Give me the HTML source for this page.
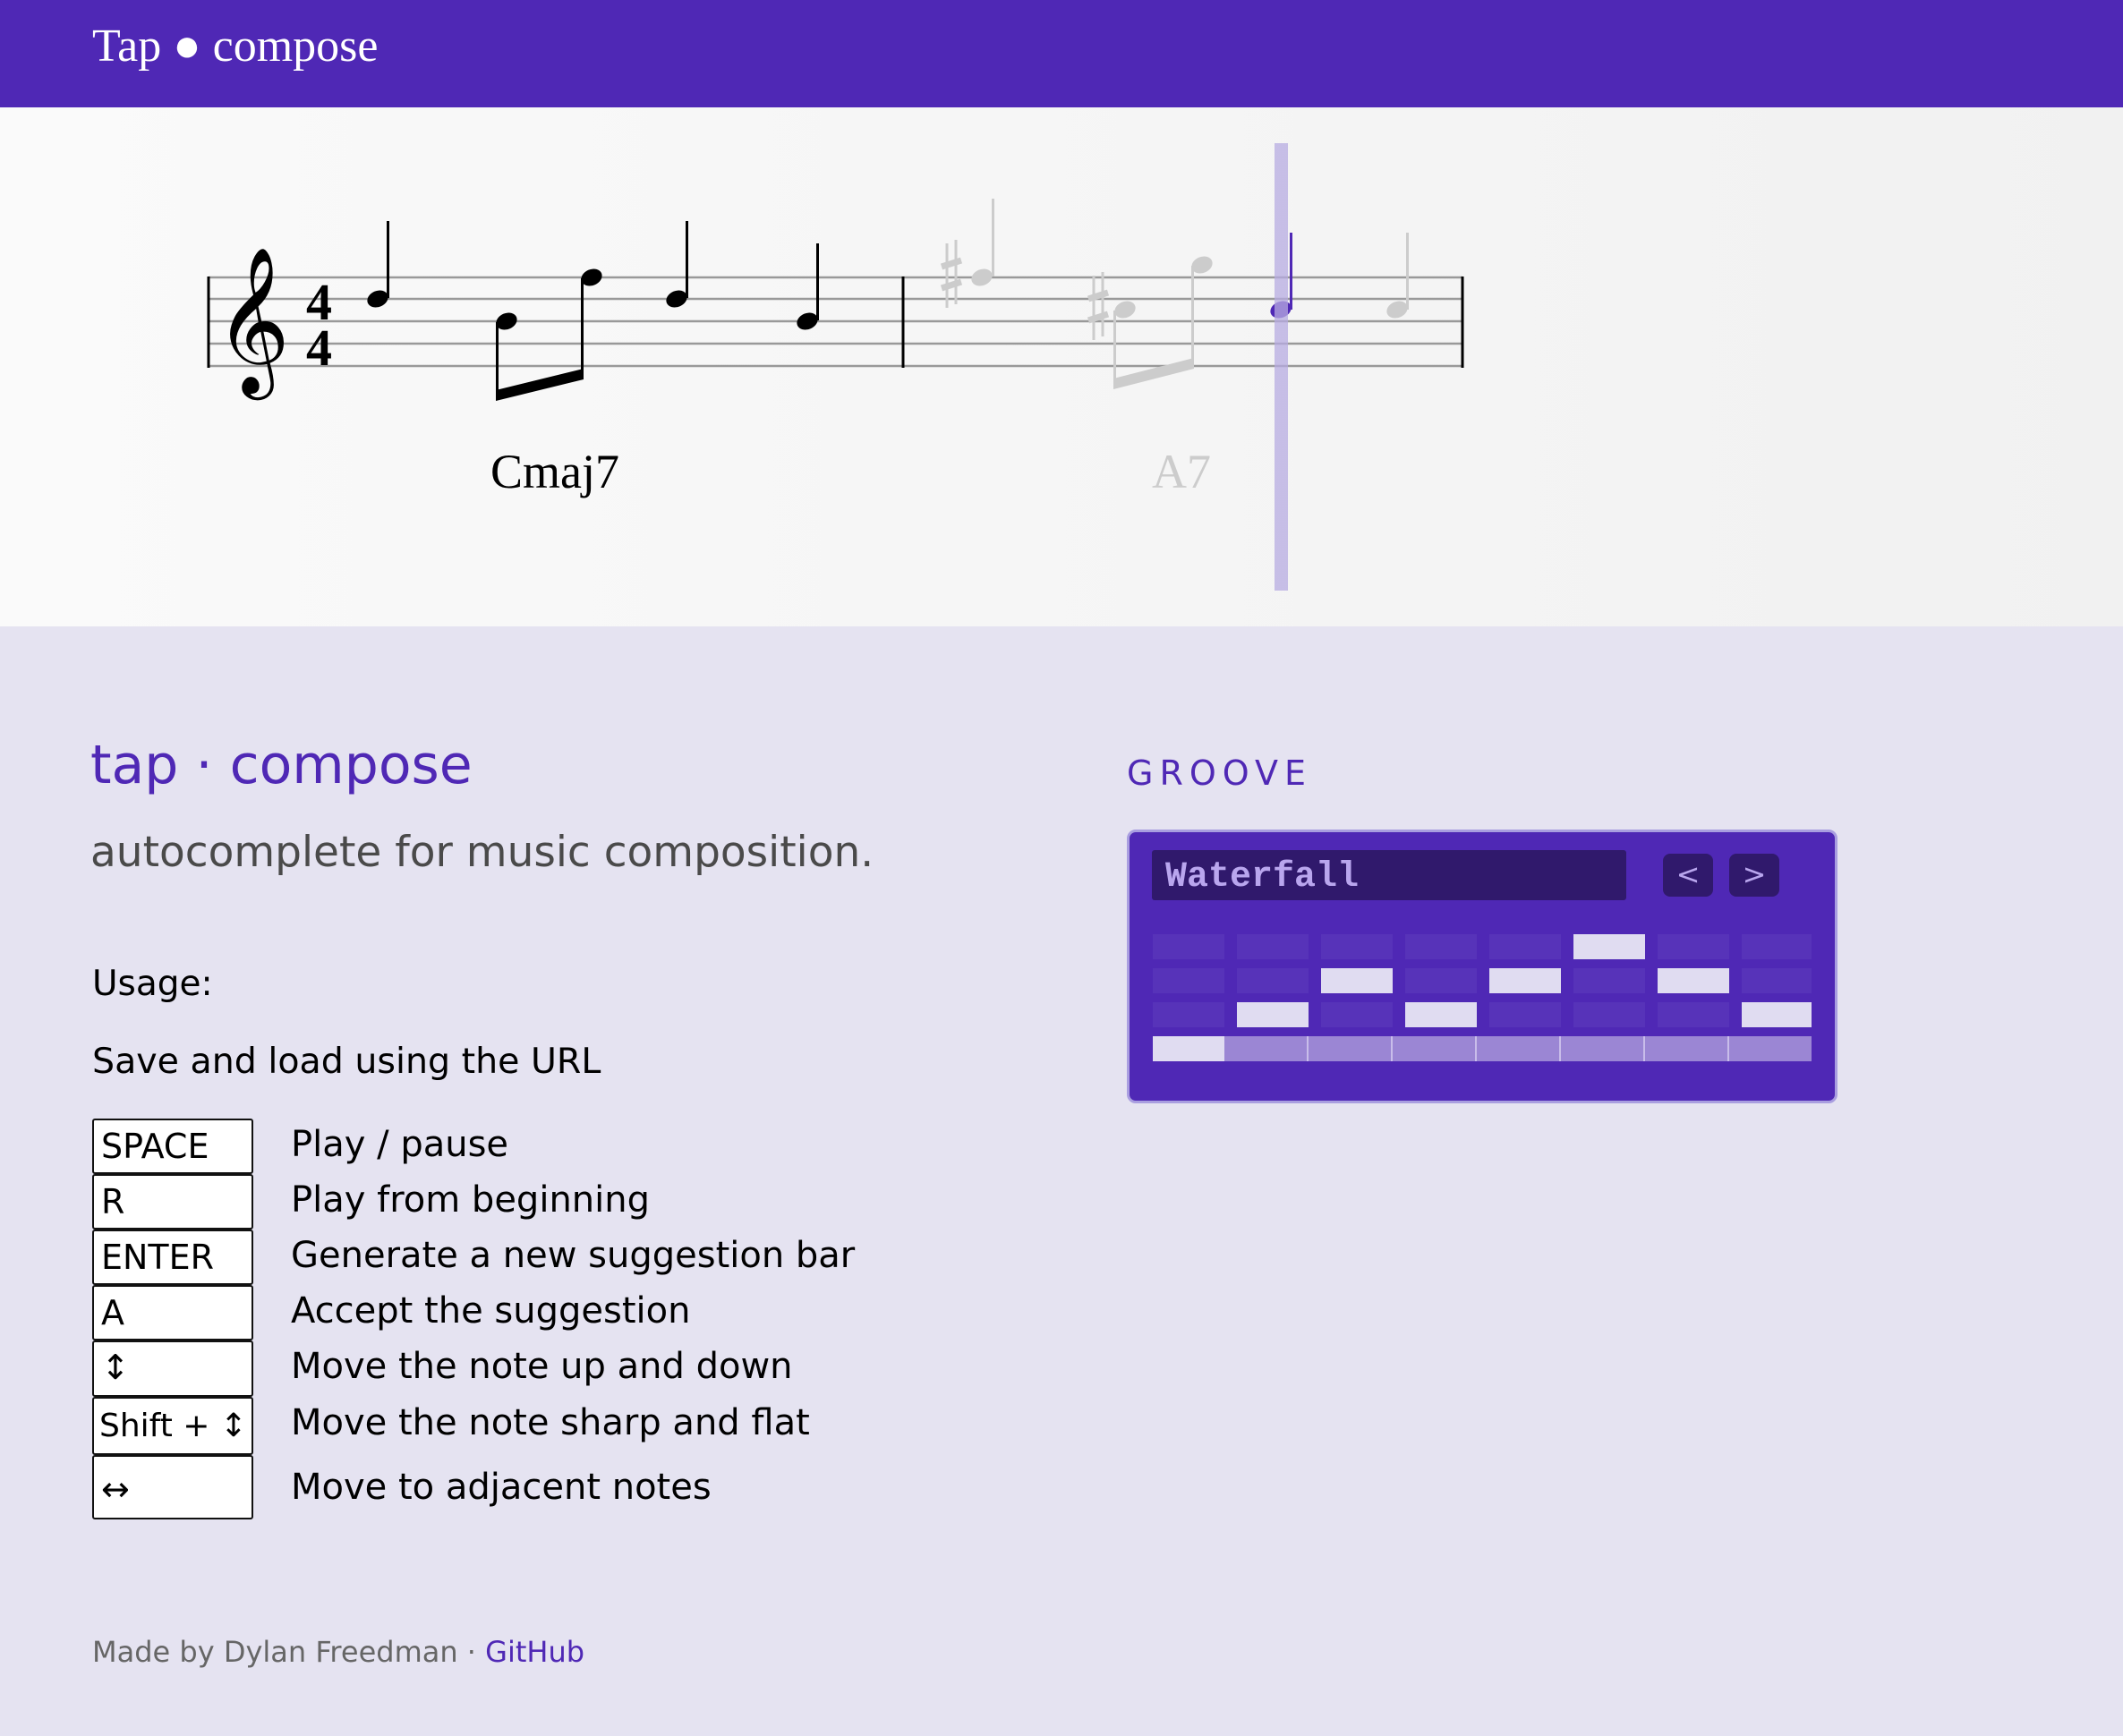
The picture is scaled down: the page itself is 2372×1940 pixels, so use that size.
<!DOCTYPE html>
<html><head><meta charset="utf-8"><style>
*{margin:0;padding:0;box-sizing:border-box}
body{width:2372px;height:1940px;overflow:hidden;background:#e5e3f1;font-family:"DejaVu Sans","Liberation Sans",sans-serif;position:relative}
.hdr{position:absolute;left:0;top:0;width:2372px;height:120px;background:#4f28b5}
.hdr span{position:absolute;left:103px;top:22px;font:52px "Liberation Serif",serif;color:#fff;white-space:nowrap}
.score{position:absolute;left:0;top:120px;width:2372px;height:580px;background:linear-gradient(90deg,#fafafa,#f1f1f1)}
.abs{position:absolute;white-space:nowrap}
.key{position:absolute;left:103px;width:180px;background:#fff;border:2px solid #111;border-radius:3px;font-size:38px;color:#000;padding-left:8px;display:flex;align-items:center;white-space:nowrap;overflow:hidden}
.desc{position:absolute;left:325px;font-size:40px;color:#000;white-space:nowrap}
.cell{position:absolute;width:80px;height:28px;background:#5733b9}
.on{background:#e0dcf1}
</style></head><body>
<div class="hdr"><span>Tap ● compose</span></div>
<div class="score">
<svg width="2372" height="580" viewBox="0 120 2372 580" style="position:absolute;left:0;top:0">
<g stroke="#999" stroke-width="2.5">
<line x1="233" y1="310" x2="1634" y2="310"/><line x1="233" y1="334" x2="1634" y2="334"/><line x1="233" y1="359" x2="1634" y2="359"/><line x1="233" y1="384" x2="1634" y2="384"/><line x1="233" y1="409" x2="1634" y2="409"/>
</g>
<g stroke="#000" stroke-width="3"><line x1="233" y1="309" x2="233" y2="411"/><line x1="1009" y1="309" x2="1009" y2="411"/><line x1="1634" y1="309" x2="1634" y2="411"/></g>
<text x="240" y="406" font-family="DejaVu Sans" font-size="142" fill="#000">𝄞</text>
<text x="342" y="357" font-family="Liberation Serif" font-weight="bold" font-size="58" fill="#000">4</text>
<text x="342" y="408" font-family="Liberation Serif" font-weight="bold" font-size="58" fill="#000">4</text>
<g fill="#000">
<ellipse cx="422" cy="334" rx="12" ry="9" transform="rotate(-22 422 334)"/><rect x="432" y="247" width="3" height="86"/>
<ellipse cx="566" cy="359" rx="12" ry="9" transform="rotate(-22 566 359)"/><rect x="554" y="360" width="3" height="84"/>
<ellipse cx="661" cy="310" rx="12" ry="9" transform="rotate(-22 661 310)"/><rect x="649" y="311" width="3" height="113"/>
<polygon points="554,436 652,412 652,424 554,448"/>
<ellipse cx="756" cy="334" rx="12" ry="9" transform="rotate(-22 756 334)"/><rect x="766" y="247" width="3" height="86"/>
<ellipse cx="902" cy="359" rx="12" ry="9" transform="rotate(-22 902 359)"/><rect x="912" y="272" width="3" height="86"/>
</g>
<g fill="#ccc" stroke="#ccc">
<g stroke-width="3"><line x1="1058" y1="272" x2="1058" y2="344"/><line x1="1068" y1="268" x2="1068" y2="340"/><line x1="1222" y1="308" x2="1222" y2="380"/><line x1="1232" y1="304" x2="1232" y2="376"/></g>
<g stroke-width="7"><line x1="1052" y1="298" x2="1074" y2="291"/><line x1="1052" y1="322" x2="1074" y2="315"/><line x1="1216" y1="334" x2="1238" y2="327"/><line x1="1216" y1="358" x2="1238" y2="351"/></g>
</g>
<g fill="#ccc">
<ellipse cx="1097" cy="310" rx="12" ry="9" transform="rotate(-22 1097 310)"/><rect x="1108" y="222" width="3" height="87"/>
<ellipse cx="1257" cy="346" rx="12" ry="9" transform="rotate(-22 1257 346)"/><rect x="1244" y="347" width="3" height="83"/>
<ellipse cx="1343" cy="296" rx="12" ry="9" transform="rotate(-22 1343 296)"/><rect x="1331" y="297" width="3" height="110"/>
<polygon points="1244,423 1334,400 1334,412 1244,435"/>
<ellipse cx="1561" cy="346" rx="12" ry="9" transform="rotate(-22 1561 346)"/><rect x="1571" y="260" width="3" height="86"/>
</g>
<ellipse cx="1431" cy="346" rx="12" ry="9" transform="rotate(-22 1431 346)" fill="#4f28b5"/><rect x="1441" y="260" width="3" height="86" fill="#4f28b5"/>
<rect x="1424" y="160" width="15" height="500" fill="#b7abe2" opacity="0.75"/>
<text x="548" y="545" font-family="Liberation Serif" font-size="54" fill="#000">Cmaj7</text>
<text x="1287" y="545" font-family="Liberation Serif" font-size="54" fill="#ccc">A7</text>
</svg>
</div>

<div class="abs" style="left:101px;top:820px;font-size:60px;color:#4f28b5">tap · compose</div>
<div class="abs" style="left:101px;top:925px;font-size:47px;color:#4a4a4a">autocomplete for music composition.</div>
<div class="abs" style="left:103px;top:1077px;font-size:39px;color:#000">Usage:</div>
<div class="abs" style="left:103px;top:1163px;font-size:39.5px;color:#000">Save and load using the URL</div>

<div class="key" style="top:1250px;height:62px">SPACE</div><div class="desc" style="top:1256px">Play / pause</div>
<div class="key" style="top:1312px;height:62px">R</div><div class="desc" style="top:1318px">Play from beginning</div>
<div class="key" style="top:1374px;height:62px">ENTER</div><div class="desc" style="top:1380px">Generate a new suggestion bar</div>
<div class="key" style="top:1436px;height:62px">A</div><div class="desc" style="top:1442px">Accept the suggestion</div>
<div class="key" style="top:1498px;height:63px;align-items:flex-start;padding-top:6px">↕</div><div class="desc" style="top:1504px">Move the note up and down</div>
<div class="key" style="top:1561px;height:65px;font-size:36px;padding-left:6px">Shift + ↕</div><div class="desc" style="top:1567px">Move the note sharp and flat</div>
<div class="key" style="top:1626px;height:72px;align-items:flex-end;padding-bottom:10px">↔</div><div class="desc" style="top:1639px">Move to adjacent notes</div>

<div class="abs" style="left:103px;top:1827px;font-size:32px;color:#666">Made by Dylan Freedman · <span style="color:#4f28b5">GitHub</span></div>

<div class="abs" style="left:1259px;top:842px;font-size:38px;color:#4f28b5;letter-spacing:7px">GROOVE</div>
<div class="abs" style="left:1259px;top:927px;width:794px;height:306px;background:#4f28b5;border:3px solid #a99ee0;border-radius:10px"></div>
<div class="abs" style="left:1287px;top:950px;width:530px;height:56px;background:#30196c;border-radius:3px"></div>
<div class="abs" style="left:1302px;top:953px;font:bold 40px 'Liberation Mono',monospace;color:#b9a6ee;line-height:56px">Waterfall</div>
<div class="abs" style="left:1858px;top:954px;width:56px;height:48px;background:#30196c;border-radius:8px;color:#b9a6ee;font-size:32px;text-align:center;line-height:46px">&lt;</div>
<div class="abs" style="left:1932px;top:954px;width:56px;height:48px;background:#30196c;border-radius:8px;color:#b9a6ee;font-size:32px;text-align:center;line-height:46px">&gt;</div>

<div class="cell" style="left:1288px;top:1044px"></div><div class="cell" style="left:1382px;top:1044px"></div><div class="cell" style="left:1476px;top:1044px"></div><div class="cell" style="left:1570px;top:1044px"></div><div class="cell" style="left:1664px;top:1044px"></div><div class="cell on" style="left:1758px;top:1044px"></div><div class="cell" style="left:1852px;top:1044px"></div><div class="cell" style="left:1946px;top:1044px;width:78px"></div>
<div class="cell" style="left:1288px;top:1082px"></div><div class="cell" style="left:1382px;top:1082px"></div><div class="cell on" style="left:1476px;top:1082px"></div><div class="cell" style="left:1570px;top:1082px"></div><div class="cell on" style="left:1664px;top:1082px"></div><div class="cell" style="left:1758px;top:1082px"></div><div class="cell on" style="left:1852px;top:1082px"></div><div class="cell" style="left:1946px;top:1082px;width:78px"></div>
<div class="cell" style="left:1288px;top:1120px"></div><div class="cell on" style="left:1382px;top:1120px"></div><div class="cell" style="left:1476px;top:1120px"></div><div class="cell on" style="left:1570px;top:1120px"></div><div class="cell" style="left:1664px;top:1120px"></div><div class="cell" style="left:1758px;top:1120px"></div><div class="cell" style="left:1852px;top:1120px"></div><div class="cell on" style="left:1946px;top:1120px;width:78px"></div>
<div class="abs" style="left:1288px;top:1158px;width:736px;height:28px;background:repeating-linear-gradient(90deg,#9b86d4 0 92px,#c9bdea 92px 94px);background-position:-14px 0"></div>
<div class="abs" style="left:1288px;top:1158px;width:80px;height:28px;background:#e0dcf1"></div>
</body></html>
